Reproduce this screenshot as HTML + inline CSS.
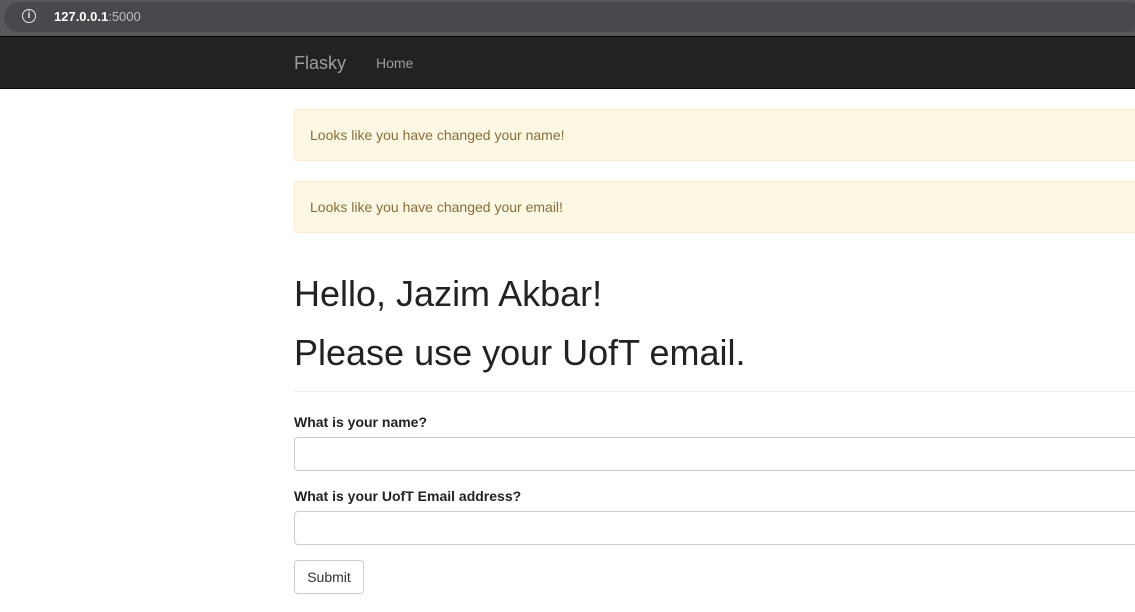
<!DOCTYPE html>
<html><head><style>
*{margin:0;padding:0;box-sizing:border-box}
body{width:1135px;height:612px;overflow:hidden;background:#fff;font-family:"Liberation Sans",Arial,sans-serif;position:relative}
.top{position:absolute;left:0;top:0;width:1135px;height:37px;background:#57585c}
.pill{position:absolute;left:4px;top:2px;width:1140px;height:30px;border-radius:15px;background:#48494d}
.info{position:absolute;left:22px;top:9px;width:14px;height:14px;border:1.5px solid #e8e8e8;border-radius:50%;color:#e8e8e8;font-size:10px;font-weight:bold;text-align:center;line-height:11px}
.url{position:absolute;left:54px;top:9px;font-size:13px;color:#fff;font-weight:bold}
.url span{color:#bdbdbd;font-weight:normal}
.nav{position:absolute;left:0;top:36px;width:1135px;height:53px;background:#222;border-top:1px solid #000;border-bottom:1px solid #080808}
.brand{position:absolute;left:294px;top:16px;font-size:18px;color:#9d9d9d}
.home{position:absolute;left:376px;top:18px;font-size:14px;color:#9d9d9d}
.alert{position:absolute;left:294px;width:860px;height:52px;background:#fcf8e3;border:1px solid #faebcc;border-radius:4px;color:#8a6d3b;font-size:14px;padding:17px 15px}
h1{position:absolute;left:294px;font-size:36px;font-weight:normal;color:#222;line-height:40px}
hr{position:absolute;left:294px;top:391px;width:860px;border:0;border-top:1px solid #eee}
label{position:absolute;left:294px;font-size:14px;font-weight:bold;color:#222}
.inp{position:absolute;left:294px;width:860px;height:34px;border:1px solid #ccc;border-radius:4px}
.btn{position:absolute;left:294px;top:560px;width:70px;height:34px;border:1px solid #ccc;border-radius:4px;font-size:14px;color:#333;text-align:center;line-height:32px}
</style></head><body>
<div class="top"><div class="pill"></div><div class="info">i</div><div class="url">127.0.0.1<span>:5000</span></div></div>
<div class="nav"><div class="brand">Flasky</div><div class="home">Home</div></div>
<div class="alert" style="top:109px">Looks like you have changed your name!</div>
<div class="alert" style="top:181px">Looks like you have changed your email!</div>
<h1 style="top:274px">Hello, Jazim Akbar!</h1>
<h1 style="top:333px">Please use your UofT email.</h1>
<hr>
<label style="top:414px">What is your name?</label>
<div class="inp" style="top:437px"></div>
<label style="top:488px">What is your UofT Email address?</label>
<div class="inp" style="top:511px"></div>
<div class="btn">Submit</div>
</body></html>
